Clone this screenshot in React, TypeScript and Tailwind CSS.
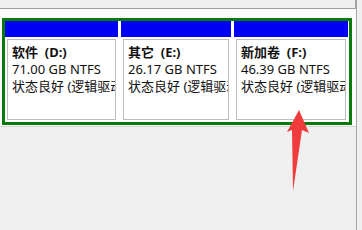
import React from 'react';

type Part = { name: string; letter: string; size: string; width: string };

const parts: Part[] = [
  { name: '软件', letter: '(D:)', size: '71.00 GB NTFS', width: 'w-[113px]' },
  { name: '其它', letter: '(E:)', size: '26.17 GB NTFS', width: 'w-[110px]' },
  { name: '新加卷', letter: '(F:)', size: '46.39 GB NTFS', width: 'w-[114px]' },
];

const Partition: React.FC<{ part: Part }> = ({ part }) => (
  <div className={`${part.width} flex flex-col`}>
    <div className="h-[16px] bg-[#0000f5]" />
    <div className="flex-1 bg-white p-[2px]">
      <div className="h-full border border-[#bdbdbd] pl-[4px] pr-[3px] pt-[4px] overflow-hidden text-[13px] leading-[17px] text-[#111]">
        <div className="font-bold whitespace-pre">{part.name}  {part.letter}</div>
        <div className="whitespace-nowrap">{part.size}</div>
        <div className="whitespace-nowrap">状态良好 (逻辑驱动器)</div>
      </div>
    </div>
  </div>
);

export default function App() {
  return (
    <div
      className="relative w-[362px] h-[230px] bg-[#f0f0f0] flex overflow-hidden"
      style={{ fontFamily: '"Noto Sans", "Noto Sans CJK SC", sans-serif' }}
    >
      <div className="w-[356px] flex flex-col">
        <div className="h-[9px] border-b border-r border-[#a0a0a0]" />
        <div className="bg-[#fbfbfb] pt-[9px] pl-[2px] pb-[1px] border-b border-[#d6d6d6]">
          <div className="w-[350px] h-[107px] border-[3px] border-[#087a08] bg-white flex gap-[3px]">
            {parts.map((p) => (
              <Partition key={p.letter} part={p} />
            ))}
          </div>
        </div>
      </div>
      <div className="w-px bg-[#a8a8a8]" />

      <svg className="absolute left-0 top-0 pointer-events-none" width="362" height="230">
        <polygon
          points="299,110 309,133 302,130 293,191 292,130 287,132"
          fill="#f03c3c"
        />
      </svg>
    </div>
  );
}
